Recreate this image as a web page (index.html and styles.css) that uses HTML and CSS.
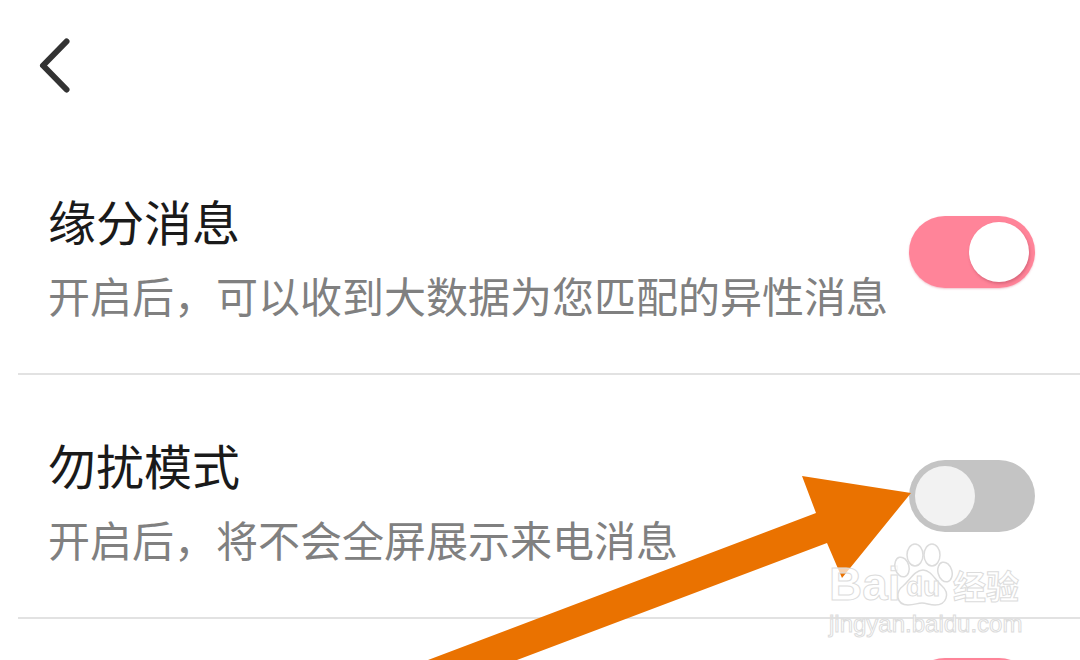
FILE: index.html
```html
<!DOCTYPE html>
<html lang="zh-CN">
<head>
    <meta charset="UTF-8">
    <meta name="viewport" content="width=device-width, initial-scale=1.0">
    <title>消息设置</title>
    <link rel="stylesheet" href="styles.css">
</head>
<body>
    <main class="page">
        <header class="top-bar">
            <svg class="back-icon" width="40" height="64" viewBox="0 0 40 64">
                <path d="M28.5 7.5 L5 31.5 L28.5 55.5" fill="none" stroke="#333" stroke-width="6" stroke-linecap="round" stroke-linejoin="round"/>
            </svg>
        </header>

        <section class="setting-row">
            <div class="setting-text">
                <h2 class="setting-title">缘分消息</h2>
                <p class="setting-desc">开启后，可以收到大数据为您匹配的异性消息</p>
            </div>
            <div class="switch switch-on"><span class="knob"></span></div>
        </section>

        <section class="setting-row">
            <div class="setting-text">
                <h2 class="setting-title">勿扰模式</h2>
                <p class="setting-desc">开启后，将不会全屏展示来电消息</p>
            </div>
            <div class="switch"><span class="knob"></span></div>
        </section>

        <section class="setting-row setting-row-last">
            <div class="switch switch-on"><span class="knob"></span></div>
        </section>
    </main>

    <!-- orange annotation arrow on top of the screenshot -->
    <svg class="arrow" width="1080" height="660" viewBox="0 0 1080 660">
        <polygon points="428,660 816,513 802,476 911,493 842,578 827,543 517,660" fill="#ea7200"/>
    </svg>

    <!-- watermark -->
    <div class="watermark">
        <div class="wm-logo">
            <span class="wm-latin">Bai</span>
            <span class="wm-paw">
                <svg width="60" height="64" viewBox="0 0 60 64">
                    <g fill="#fff" fill-opacity="0.7" stroke="#dcdcdc" stroke-width="1.5">
                        <ellipse cx="9" cy="24" rx="7" ry="10" transform="rotate(-15 9 24)"/>
                        <ellipse cx="22" cy="12" rx="8" ry="11"/>
                        <ellipse cx="39" cy="12" rx="8" ry="11"/>
                        <ellipse cx="52" cy="29" rx="7" ry="10" transform="rotate(-15 52 29)"/>
                        <path d="M30 27 C38 27 42 37 49 43 C57 50 54 62 42 62 C36 62 34 60 29 60 C24 60 22 62 15 62 C3 62 2 49 10 43 C17 37 22 27 30 27 Z"/>
                    </g>
                </svg>
                <span class="wm-du">du</span>
            </span>
            <span class="wm-cn">经验</span>
        </div>
        <div class="wm-url">jingyan.baidu.com</div>
    </div>
</body>
</html>
```

FILE: styles.css
```css
* {
    margin: 0;
    padding: 0;
    box-sizing: border-box;
}

html, body {
    height: 660px;
    overflow: hidden;
}

body {
    background: #fff;
    font-family: "Noto Sans CJK SC", "Liberation Sans", sans-serif;
}

.page {
    display: flex;
    flex-direction: column;
    height: 660px;
    overflow: hidden;
}

.top-bar {
    flex: none;
    height: 131px;
    padding: 34px 0 0 38px;
}

.back-icon {
    display: block;
}

.setting-row {
    flex: none;
    display: flex;
    align-items: center;
    height: 244px;
    margin-left: 18px;
    padding: 0 45px 0 30px;
    border-bottom: 2px solid #e2e2e2;
}

.setting-row-last {
    height: 150px;
    border-bottom: none;
    justify-content: flex-end;
}

.setting-text {
    flex: 1;
    padding-top: 7px;
}

.setting-title {
    font-size: 48px;
    font-weight: 400;
    line-height: 64px;
    color: #1a1a1a;
}

.setting-desc {
    font-size: 42px;
    line-height: 58px;
    margin-top: 14px;
    color: #808080;
}

.switch {
    display: flex;
    align-items: center;
    width: 126px;
    height: 72px;
    padding: 0 6px;
    border-radius: 36px;
    background: #c4c4c4;
}

.switch-on {
    justify-content: flex-end;
    background: #ff8499;
    box-shadow: 0 1px 2px rgba(214, 90, 115, 0.35);
}

.knob {
    width: 60px;
    height: 60px;
    border-radius: 50%;
    background: #f2f2f2;
}

.switch-on .knob {
    background: #fff;
    box-shadow: 1px 2px 3px rgba(150, 50, 70, 0.35);
}

.arrow {
    position: absolute;
    left: 0;
    top: 0;
}

.watermark {
    position: absolute;
    left: 829px;
    top: 543px;
    width: 200px;
    font-family: "Liberation Sans", sans-serif;
    color: rgba(255, 255, 255, 0.7);
    -webkit-text-stroke: 1px #dcdcdc;
}

.wm-logo {
    display: flex;
    align-items: flex-end;
    height: 64px;
}

.wm-latin {
    flex: none;
    width: 64px;
    margin-bottom: -2px;
    font-size: 46px;
    font-weight: 700;
    line-height: 50px;
}

.wm-paw {
    flex: none;
    position: relative;
    width: 60px;
    height: 64px;
}

.wm-paw svg {
    display: block;
}

.wm-du {
    position: absolute;
    left: 13px;
    bottom: 4px;
    font-size: 28px;
    font-weight: 700;
    line-height: 32px;
}

.wm-cn {
    flex: none;
    font-family: "Noto Sans CJK SC", sans-serif;
    font-size: 33px;
    font-weight: 700;
    line-height: 44px;
}

.wm-url {
    font-size: 24px;
    line-height: 28px;
    margin-top: 3px;
}
```
